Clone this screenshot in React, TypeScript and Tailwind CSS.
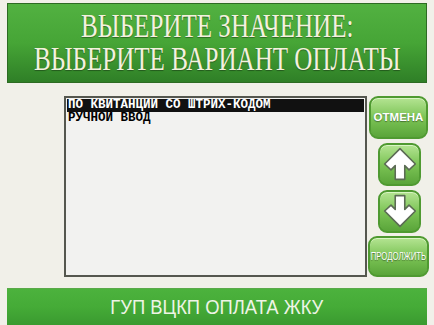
import React from "react";

function Arrow({ down = false }: { down?: boolean }) {
  return (
    <svg width="36" height="36" viewBox="0 0 34 34" className={down ? "rotate-180" : ""}>
      <path
        d="M17 2.5 L31.5 17 L25.5 22.5 L21.5 18.5 L21.5 31.5 L12.5 31.5 L12.5 18.5 L8.5 22.5 L2.5 17 Z"
        fill="#ffffff"
        stroke="#5c6b55"
        strokeWidth="1.5"
        strokeLinejoin="round"
      />
    </svg>
  );
}

export default function App() {
  const btn =
    "flex items-center justify-center rounded-[9px] border-2 border-[#4f9a31] bg-gradient-to-b from-[#b4e492] via-[#7cc455] to-[#5aa53a] shadow-[inset_0_1px_0_#d9f5c4]";
  return (
    <div className="w-[434px] h-[325px] overflow-hidden bg-[#f1f0e9] flex flex-col">
      <div className="mx-[7px] mt-[3px] h-[81px] border border-[#2d6b23] bg-gradient-to-b from-[#52b141] via-[#46a536] to-[#2f7f27] flex flex-col items-center justify-center">
        <div
          className="scale-x-[0.76] text-[#f4f1de] text-[33px] leading-[33px] text-center whitespace-nowrap"
          style={{ fontFamily: '"Liberation Serif", "Times New Roman", "DejaVu Serif", serif', textShadow: "0 1px 1px rgba(0,0,0,0.35)" }}
        >
          <div>ВЫБЕРИТЕ ЗНАЧЕНИЕ:</div>
          <div>ВЫБЕРИТЕ ВАРИАНТ ОПЛАТЫ</div>
        </div>
      </div>

      <div className="flex mt-[13px] h-[181px]">
        <div className="ml-[64px] w-[303px] h-[181px] border-2 border-[#55574f] bg-[#f2f2f0] p-[1px]">
          <div
            className="text-[12.5px] leading-[13px] font-bold"
            style={{ fontFamily: '"Liberation Mono", "Courier New", monospace' }}
          >
            <div className="bg-[#111111] text-white pl-[1px] h-[13px]">ПО КВИТАНЦИИ СО ШТРИХ-КОДОМ</div>
            <div className="text-black pl-[1px] h-[13px]">РУЧНОЙ ВВОД</div>
          </div>
        </div>
        <div className="ml-[2px] w-[59px] flex flex-col items-center">
          <div className={`${btn} w-[59px] h-[43px]`}>
            <span
              className="text-white text-[11.5px] font-bold"
              style={{ fontFamily: '"Liberation Sans", Arial, sans-serif', textShadow: "0 1px 1px rgba(0,0,0,0.4)" }}
            >
              ОТМЕНА
            </span>
          </div>
          <div className={`${btn} w-[43px] h-[43px] mt-[4px] ml-[2px]`}>
            <Arrow />
          </div>
          <div className={`${btn} w-[43px] h-[43px] mt-[4px] ml-[2px]`}>
            <Arrow down />
          </div>
          <div className={`${btn} w-[61px] h-[42px] mt-[3px]`}>
            <span
              className="text-white text-[10.5px] scale-x-[0.74] whitespace-nowrap"
              style={{ fontFamily: '"Liberation Sans", Arial, sans-serif', textShadow: "0 1px 1px rgba(0,0,0,0.4)" }}
            >
              ПРОДОЛЖИТЬ
            </span>
          </div>
        </div>
      </div>

      <div className="mx-[7px] mt-[11px] h-[37px] border-t border-[#5aa948] bg-gradient-to-b from-[#4cb23d] via-[#45ab37] to-[#3a9a30] flex items-center justify-center">
        <span
          className="text-[#eef4e6] text-[20px] scale-x-[0.92] whitespace-nowrap"
          style={{ fontFamily: '"Liberation Sans", Arial, sans-serif' }}
        >
          ГУП ВЦКП ОПЛАТА ЖКУ
        </span>
      </div>
    </div>
  );
}
